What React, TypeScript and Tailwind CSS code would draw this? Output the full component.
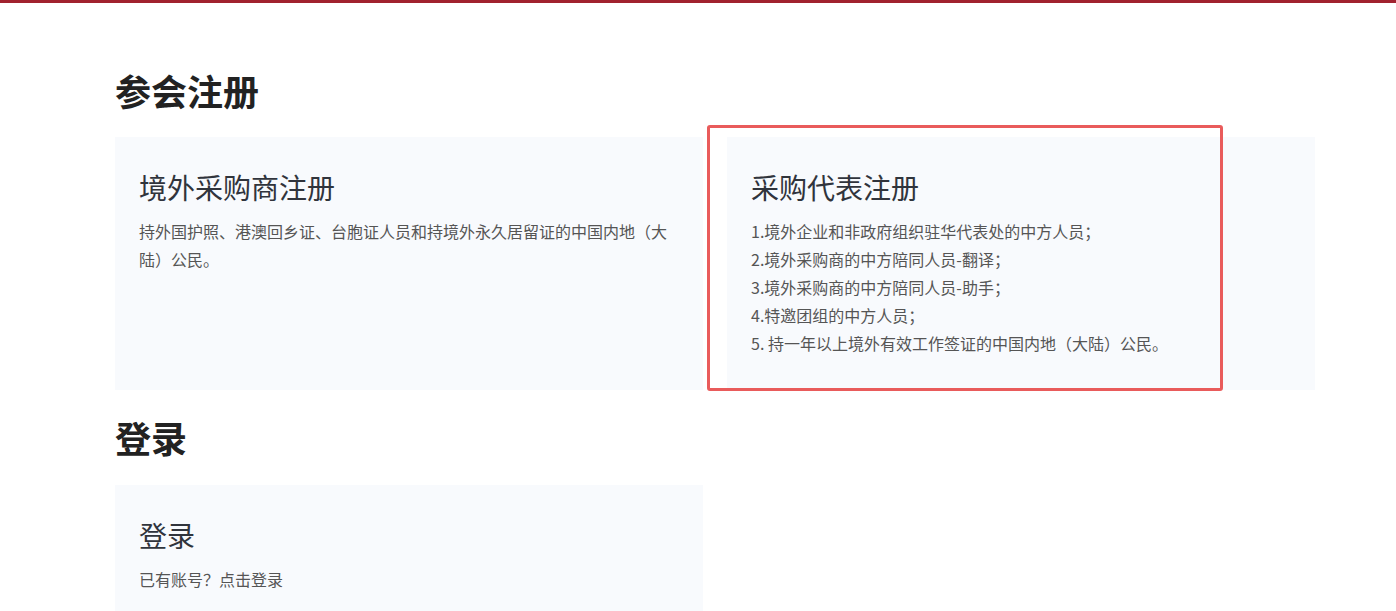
const font = { fontFamily: '"Noto Sans CJK SC", "Noto Sans", sans-serif' };

function Card({ title, children }: { title: string; children: React.ReactNode }) {
  return (
    <div className="bg-[#f8fafd] px-6 pt-[32px] pb-[33px]">
      <h3 className="text-[28px] leading-[36px] text-[#30343c]">{title}</h3>
      <div className="mt-[12px] text-[16px] leading-[28px] text-[#555]">{children}</div>
    </div>
  );
}

export default function App() {
  return (
    <div className="min-h-[611px] bg-white" style={font}>
      <div className="h-[3px] bg-[#a1222f]" />
      <div className="relative ml-[115px] w-[1200px] pt-[65px]">
        <h2 className="text-[36px] font-bold leading-[44px] text-[#222]">参会注册</h2>

        <div className="mt-[25px] grid grid-cols-2 gap-6">
          <Card title="境外采购商注册">
            <p>持外国护照、港澳回乡证、台胞证人员和持境外永久居留证的中国内地（大陆）公民。</p>
          </Card>
          <Card title="采购代表注册">
            <p>1.境外企业和非政府组织驻华代表处的中方人员；</p>
            <p>2.境外采购商的中方陪同人员-翻译；</p>
            <p>3.境外采购商的中方陪同人员-助手；</p>
            <p>4.特邀团组的中方人员；</p>
            <p>5. 持一年以上境外有效工作签证的中国内地（大陆）公民。</p>
          </Card>
        </div>

        {/* highlight annotation around the second card */}
        <div className="pointer-events-none absolute left-[592px] top-[122px] h-[266px] w-[516px] rounded-[3px] border-[3px] border-[#e95b5b]" />

        <h2 className="mt-[25px] text-[36px] font-bold leading-[44px] text-[#222]">登录</h2>

        <div className="mt-[26px] grid grid-cols-2 gap-6">
          <Card title="登录">
            <p>已有账号？点击登录</p>
          </Card>
        </div>
      </div>
    </div>
  );
}
